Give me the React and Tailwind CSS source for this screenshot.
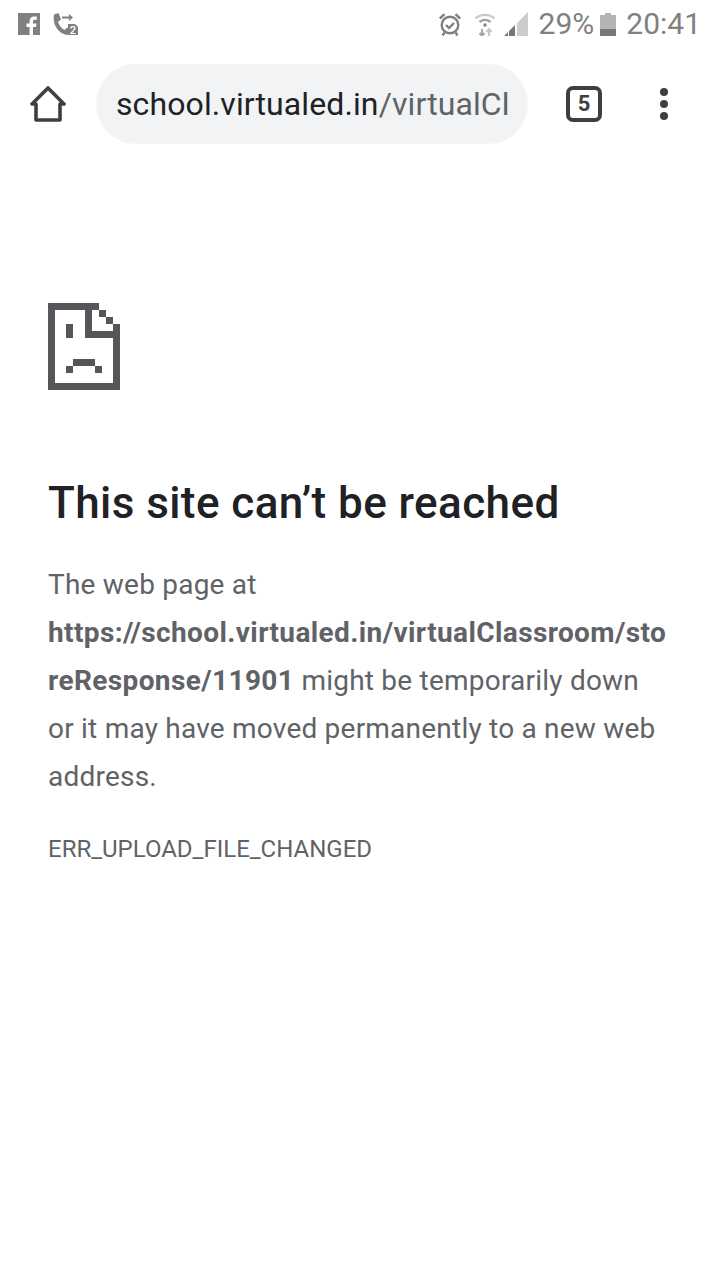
const roboto = { fontFamily: 'Roboto, sans-serif' };

function StatusBar() {
  return (
    <div className="flex h-[48px] items-center justify-between pl-[18px] pr-[19px] text-[#808080]">
      <div className="flex items-center gap-[11px]">
        <svg width="22" height="22" viewBox="0 0 22 22">
          <path d="M0 0h22v22H0z M15 22v-8h3l.5-3.4H15V8.4c0-1 .4-1.700 1.800-1.700h2V3.600c-.4 0-1.500-.1-2.700-.1-2.700 0-4.500 1.600-4.500 4.500v2.600H8.500V14h3.100v8z" fill="#808080" fillRule="evenodd" />
        </svg>
        <svg width="28" height="24" viewBox="0 0 28 24">
          <path d="M3 2.500 7.500 1l2.500 6.500-3 2.200c1 3.300 3.400 6.500 6.500 8.300l2.800-2.500 4 5-3 2.500C8.500 22.500 1 13.500 3 2.500z" fill="#808080" />
          <path d="M11 4.500h7V2l4 3.500L18 9V6.500h-7z" fill="#808080" />
          <path d="M17 12h7l3 3v8H17z" fill="#808080" />
          <text x="22" y="22" textAnchor="middle" fontSize="11" fontWeight="500" fill="#fff" fontFamily="Roboto, sans-serif">2</text>
        </svg>
      </div>
      <div className="flex items-center" style={roboto}>
        <svg width="24" height="24" viewBox="0 0 24 24" fill="none" stroke="#808080" strokeWidth="2.400">
          <circle cx="12" cy="13" r="8.300" />
          <path d="M8 13l3 3 5-5" />
          <path d="M1.800 6.500 6.500 2.200M22.200 6.500 17.500 2.200M6.500 20.500l-2 3M17.500 20.500l2 3" />
        </svg>
        <svg className="ml-[11px]" width="24" height="24" viewBox="0 0 24 24" fill="none" strokeWidth="2.400">
          <path d="M2.500 6.500c5.200-4.800 13.800-4.800 19 0" stroke="#c8c8c8" />
          <path d="M6.500 10c3.200-2.800 7.800-2.800 11 0" stroke="#a0a0a0" />
          <circle cx="12" cy="13" r="1.700" fill="#808080" stroke="none" />
          <path d="M9 17v7M6.500 21 9 24l2.500-3" stroke="#a8a8a8" strokeWidth="2" />
          <path d="M16 24v-7M13.500 20 16 17l2.500 3" stroke="#c8c8c8" strokeWidth="2" />
        </svg>
        <svg className="ml-[7px]" width="24" height="24" viewBox="0 0 24 24">
          <path d="M13 11 24 0v24H13z" fill="#cccccc" />
          <path d="M0 24l4-4v4zM5 19l6-6v11H5z" fill="#777777" />
        </svg>
        <span className="ml-[11px] text-[30px] leading-none">29%</span>
        <svg className="ml-[6px]" width="16" height="24" viewBox="0 0 16 24">
          <path d="M0 3h5V1h6v2h5v21H0z" fill="#b4b4b4" />
          <path d="M0 17h16v7H0z" fill="#777777" />
        </svg>
        <span className="ml-[10px] text-[30px] leading-none">20:41</span>
      </div>
    </div>
  );
}

function Toolbar() {
  return (
    <div className="mt-[16px] flex h-[80px] items-center">
      <div className="flex w-[96px] justify-center">
        <svg width="36" height="36" viewBox="0 0 36 36" fill="none" stroke="#3c4043" strokeWidth="3.600" strokeLinejoin="round">
          <path d="M2 18 18 2l16 16h-4v16H6V18z" />
        </svg>
      </div>
      <div className="flex h-[80px] w-[432px] items-center overflow-hidden rounded-[40px] bg-[#f1f3f4] pl-[20px] pr-[18px]">
        <div className="whitespace-nowrap text-[32px] tracking-[0.1px] text-[#202124]" style={roboto}>
          school.virtualed.in<span className="text-[#5f6368]">/virtualCl</span>
        </div>
      </div>
      <div className="flex w-[112px] justify-center">
        <div className="flex h-[36px] w-[36px] items-center justify-center rounded-[7px] border-[4px] border-[#3c4043] text-[22px] font-bold leading-none text-[#3c4043]" style={roboto}>
          5
        </div>
      </div>
      <div className="flex w-[48px] flex-col items-center gap-[4px]">
        <div className="h-[8px] w-[8px] rounded-full bg-[#3c4043]" />
        <div className="h-[8px] w-[8px] rounded-full bg-[#3c4043]" />
        <div className="h-[8px] w-[8px] rounded-full bg-[#3c4043]" />
      </div>
    </div>
  );
}

function SadTab() {
  return (
    <svg width="72" height="87" viewBox="48 303 72 87" fill="#54565a">
      <path d="M48 303h51v7H55v73h58v-45H92v-7h28v59H48z" />
      <path d="M85 303h7v35h-7z" />
      <path d="M99 310h7v7h-7zM106 317h7v7h-7zM113 324h7v7h-7z" />
      <path d="M66 324h7v14h-7zM73 359h22v7H73zM66 366h7v7h-7zM95 366h7v7h-7z" />
    </svg>
  );
}

export default function App() {
  return (
    <div className="min-h-[1280px] bg-white" style={roboto}>
      <StatusBar />
      <Toolbar />
      <div className="px-[48px] pt-[159px]">
        <SadTab />
        <h1 className="mt-[85px] text-[44px] font-medium leading-[56px] tracking-[0.42px] text-[#202124]">
          This site can’t be reached
        </h1>
        <p className="mt-[30px] w-[620px] text-[28px] leading-[48px] tracking-[0.22px] text-[#5f6368]">
          The web page at
          <br />
          <strong className="break-all font-bold tracking-[0.39px]">https://school.virtualed.in/virtualClassroom/storeResponse/11901</strong> might be temporarily down or it may have moved permanently to a new web address.
        </p>
        <p className="mt-[30px] text-[24px] leading-[36px] text-[#5f6368]">ERR_UPLOAD_FILE_CHANGED</p>
      </div>
    </div>
  );
}
